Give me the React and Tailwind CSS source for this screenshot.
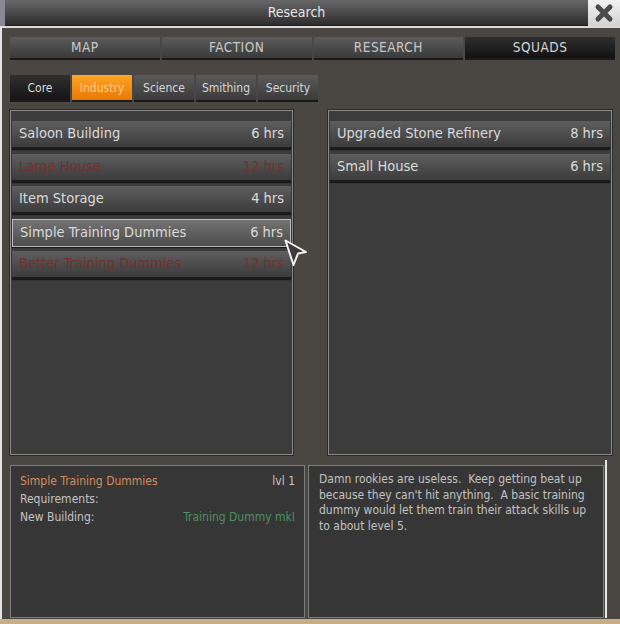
import React from "react";

const font = "font-['DejaVu_Sans_Condensed','DejaVu_Sans',sans-serif]";

const topTabs = [
  { label: "MAP" },
  { label: "FACTION" },
  { label: "RESEARCH" },
  { label: "SQUADS", active: true },
];

const subTabs = [
  { label: "Core", dark: true },
  { label: "Industry", active: true },
  { label: "Science" },
  { label: "Smithing" },
  { label: "Security" },
];

const available = [
  { name: "Saloon Building", time: "6 hrs" },
  { name: "Large House", time: "12 hrs", locked: true },
  { name: "Item Storage", time: "4 hrs" },
  { name: "Simple Training Dummies", time: "6 hrs", selected: true },
  { name: "Better Training Dummies", time: "12 hrs", locked: true },
];

const queued = [
  { name: "Upgraded Stone Refinery", time: "8 hrs" },
  { name: "Small House", time: "6 hrs" },
];

function Row({ item }) {
  const base = item.selected
    ? "bg-gradient-to-b from-[#737373] to-[#4c4c4c] border border-[#bcbcbc]"
    : "bg-gradient-to-b from-[#5e5e5e] to-[#3c3c3c] border-b-2 border-[#1c1c1c]";
  const color = item.locked ? "text-[#73302c]" : "text-[#dadada]";
  return (
    <div className={`h-[28px] flex items-center justify-between pl-[7px] pr-[7px] text-[14.5px] shadow-[0_1px_1px_rgba(0,0,0,0.6)] ${base} ${color}`}>
      <span>{item.name}</span>
      <span>{item.time}</span>
    </div>
  );
}

function ListPanel({ items, width }) {
  return (
    <div className={`${width} h-full bg-[#3c3c3c] border border-[#8a8a8a] shadow-[0_0_0_1px_#2a2a2a] pt-[10px] px-[1px] flex flex-col gap-[4.5px]`}>
      {items.map((it) => (
        <Row key={it.name} item={it} />
      ))}
    </div>
  );
}

function Cursor() {
  return (
    <svg className="absolute left-[284px] top-[239px]" width="26" height="30" viewBox="0 0 26 30">
      <polygon
        points="1.5,1.5 22,13 14,14.5 9.5,26"
        fill="#3a3a3a"
        stroke="#f2f2f2"
        strokeWidth="2"
        strokeLinejoin="round"
      />
    </svg>
  );
}

export default function App() {
  return (
    <div className={`w-[620px] h-[624px] relative overflow-hidden bg-[#c7ae86] ${font}`}>
      {/* title bar */}
      <div className="flex h-[26px]">
        <div className="w-[5px] bg-[#8b8895]" />
        <div className="flex-1 flex items-center justify-center bg-gradient-to-b from-[#686868] via-[#4a4a4a] to-[#2d2d2d] border-b border-[#1a1a1a] text-[14px] text-[#e6e6e6]">
          Research
        </div>
        <div className="w-[32px] flex items-center justify-center bg-gradient-to-b from-[#f2f2f2] to-[#d2d2d2]">
          <svg width="20" height="20" viewBox="0 0 20 20">
            <path d="M4 4 L16 16 M16 4 L4 16" stroke="#4a4a4a" strokeWidth="5" strokeLinecap="round" />
          </svg>
        </div>
      </div>

      {/* window body */}
      <div className="h-[593px] bg-[#4a4743] border-t-2 border-t-[#d9d9d9] border-l-2 border-l-[#e4e4e4] pl-[8px] pr-[5px] pt-[9px]">
        <div className="grid grid-cols-4 gap-[2px] h-[23px]">
          {topTabs.map((t) => (
            <div
              key={t.label}
              className={`flex items-center justify-center text-[13.5px] tracking-[0.5px] border-b-2 border-[#1a1a1a] ${
                t.active
                  ? "bg-gradient-to-b from-[#2f2f2f] to-[#121212] text-[#d6d6d6]"
                  : "bg-gradient-to-b from-[#5b5b5b] to-[#3a3a3a] text-[#c8c8c8]"
              }`}
            >
              {t.label}
            </div>
          ))}
        </div>

        <div className="flex gap-[2px] h-[27px] mt-[15px]">
          {subTabs.map((t) => (
            <div
              key={t.label}
              className={`w-[60px] flex items-center justify-center text-[12px] border-b-2 border-[#1a1a1a] ${
                t.active
                  ? "bg-gradient-to-b from-[#ffa424] to-[#e77800] text-[#ffc98a]"
                  : t.dark
                  ? "bg-gradient-to-b from-[#303030] to-[#151515] text-[#dcdcdc]"
                  : "bg-gradient-to-b from-[#5a5a5a] to-[#3b3b3b] text-[#d6d6d6]"
              }`}
            >
              {t.label}
            </div>
          ))}
        </div>

        <div className="flex gap-[35px] h-[345px] mt-[8px]">
          <ListPanel items={available} width="w-[283px]" />
          <ListPanel items={queued} width="w-[284px]" />
        </div>

        <div className="flex gap-[3px] h-[153px] mt-[10px]">
          <div className="w-[295px] h-full bg-[#363636] border border-[#7c7c7c] px-[9px] pt-[6px] text-[12px] leading-[18px] text-[#c4c4c4]">
            <div className="flex justify-between">
              <span className="text-[#d98b5e]">Simple Training Dummies</span>
              <span>lvl 1</span>
            </div>
            <div>Requirements:</div>
            <div className="flex justify-between">
              <span>New Building:</span>
              <span className="text-[#4f8f64]">Training Dummy mkI</span>
            </div>
          </div>
          <div className="w-[296px] h-full bg-[#363636] border border-[#7c7c7c] pl-[10px] pr-[8px] pt-[6px] text-[12px] leading-[15.7px] text-[#c2c2c2]">
            Damn rookies are useless.&nbsp; Keep getting beat up because they can't hit anything.&nbsp; A basic training dummy would let them train their attack skills up to about level 5.
          </div>
        </div>
      </div>

      {/* edge of the window behind */}
      <div className="absolute left-[605px] top-[460px] w-[2px] h-[158px] bg-[#e6e6e6]" />

      <Cursor />
    </div>
  );
}
